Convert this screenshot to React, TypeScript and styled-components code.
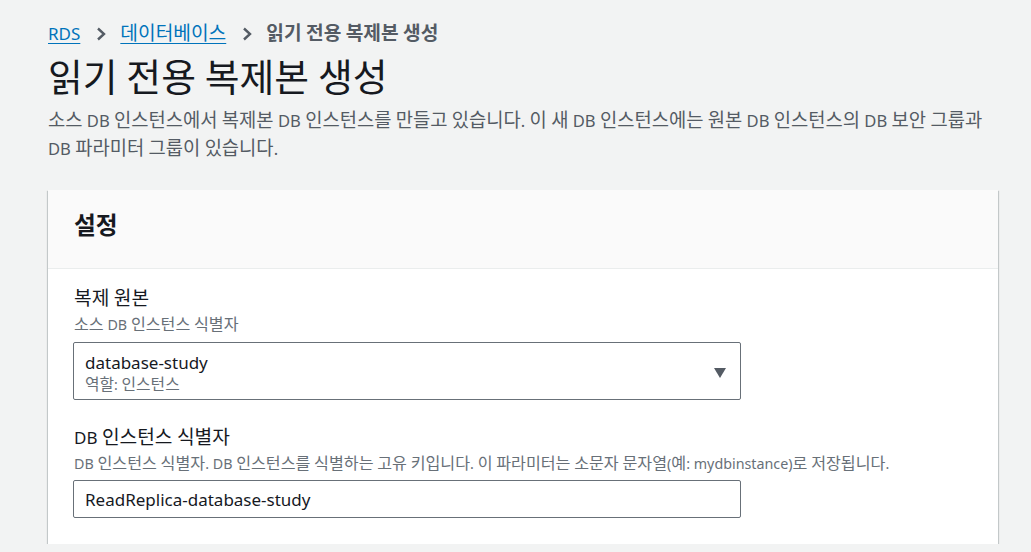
import styled, { createGlobalStyle } from 'styled-components'

const GlobalStyle = createGlobalStyle`
  html, body {
    margin: 0;
    padding: 0;
    background: #f2f3f3;
  }
  body {
    font-family: "Noto Sans", "Noto Sans CJK KR", sans-serif;
    color: #16191f;
  }
`

// Hangul glyphs in the reference run wider than Noto CJK's at the same size
const Hangul = styled.span`
  font-size: 1.13em;
  line-height: 1;
`

const HANGUL = /([\u1100-\u11FF\u3130-\u318F\uAC00-\uD7AF]+)/

function T({ children }: { children: string }) {
  return (
    <>
      {children.split(HANGUL).map((part, i) =>
        i % 2 === 1 ? <Hangul key={i}>{part}</Hangul> : part
      )}
    </>
  )
}

const Page = styled.div`
  width: 950px;
  padding: 22px 33px 0 48px;
`

const Breadcrumbs = styled.nav`
  display: flex;
  align-items: center;
  height: 24px;
  font-size: 17px;
  line-height: 24px;
`

const Crumb = styled.a`
  color: #0073bb;
  text-decoration: underline;
  text-underline-offset: 3px;
  cursor: pointer;
`

const Current = styled.span`
  color: #545b64;
  font-weight: 700;
`

const Sep = styled.svg`
  width: 14px;
  height: 14px;
  margin: 0 12px 0 14px;
`

const Title = styled.h1`
  margin: 10px 0 0;
  font-size: 33.5px;
  line-height: 44px;
  font-weight: 400;
  color: #16191f;
`

const Description = styled.p`
  margin: 7px 0 0;
  font-size: 16.6px;
  line-height: 28px;
  color: #545b64;
  word-break: keep-all;
`

const Card = styled.section`
  margin-top: 27px;
  background: #fff;
  box-shadow: 0 1px 1px 0 rgba(0, 28, 36, 0.3), 1px 1px 1px 0 rgba(0, 28, 36, 0.15),
    -1px 1px 1px 0 rgba(0, 28, 36, 0.15);
`

const CardHeader = styled.header`
  background: #fafafa;
  border-bottom: 1px solid #eaeded;
  padding: 21px 26px 27px;
  font-size: 21px;
  line-height: 30px;
  font-weight: 700;
  color: #16191f;
`

const CardBody = styled.div`
  padding: 18px 25px 26px;
`

const Field = styled.div<{ $gap?: number }>`
  margin-top: ${(p) => p.$gap ?? 0}px;
`

const Label = styled.div`
  font-size: 17px;
  line-height: 24px;
  padding-left: 1px;
`

const Hint = styled.div`
  margin-top: 4px;
  font-size: 14.3px;
  line-height: 20px;
  color: #687078;
  padding-left: 1px;
`

const SelectBox = styled.div`
  margin-top: 7px;
  width: 668px;
  height: 58px;
  box-sizing: border-box;
  border: 1px solid #687078;
  border-radius: 2px;
  padding: 9px 14px 0 11px;
  display: flex;
  align-items: center;
  justify-content: space-between;
`

const SelectText = styled.div`
  display: flex;
  flex-direction: column;
  align-self: flex-start;
`

const SelectValue = styled.span`
  font-size: 17px;
  line-height: 22px;
`

const SelectSub = styled.span`
  font-size: 14px;
  line-height: 21px;
  color: #687078;
`

const Caret = styled.svg`
  width: 12px;
  height: 10px;
  margin-top: -6px;
`

const Input = styled.div`
  margin-top: 6px;
  width: 668px;
  height: 38px;
  box-sizing: border-box;
  border: 1px solid #687078;
  border-radius: 2px;
  padding: 0 11px;
  display: flex;
  align-items: center;
  font-size: 17px;
`

function Chevron() {
  return (
    <Sep viewBox="0 0 14 14">
      <path d="M4 1.5 L10 7 L4 12.5" fill="none" stroke="#545b64" strokeWidth="2.4" />
    </Sep>
  )
}

export default function App() {
  return (
    <>
      <GlobalStyle />
      <Page>
        <Breadcrumbs>
          <Crumb>RDS</Crumb>
          <Chevron />
          <Crumb><T>데이터베이스</T></Crumb>
          <Chevron />
          <Current><T>읽기 전용 복제본 생성</T></Current>
        </Breadcrumbs>
        <Title><T>읽기 전용 복제본 생성</T></Title>
        <Description>
          <T>
            소스 DB 인스턴스에서 복제본 DB 인스턴스를 만들고 있습니다. 이 새 DB 인스턴스에는 원본 DB 인스턴스의 DB 보안 그룹과 DB 파라미터 그룹이 있습니다.
          </T>
        </Description>
        <Card>
          <CardHeader><T>설정</T></CardHeader>
          <CardBody>
            <Field>
              <Label><T>복제 원본</T></Label>
              <Hint><T>소스 DB 인스턴스 식별자</T></Hint>
              <SelectBox>
                <SelectText>
                  <SelectValue>database-study</SelectValue>
                  <SelectSub><T>역할: 인스턴스</T></SelectSub>
                </SelectText>
                <Caret viewBox="0 0 12 10">
                  <path d="M0 0 H12 L6 10 Z" fill="#545b64" />
                </Caret>
              </SelectBox>
            </Field>
            <Field $gap={26}>
              <Label><T>DB 인스턴스 식별자</T></Label>
              <Hint>
                <T>
                  DB 인스턴스 식별자. DB 인스턴스를 식별하는 고유 키입니다. 이 파라미터는 소문자 문자열(예: mydbinstance)로 저장됩니다.
                </T>
              </Hint>
              <Input>ReadReplica-database-study</Input>
            </Field>
          </CardBody>
        </Card>
      </Page>
    </>
  )
}
